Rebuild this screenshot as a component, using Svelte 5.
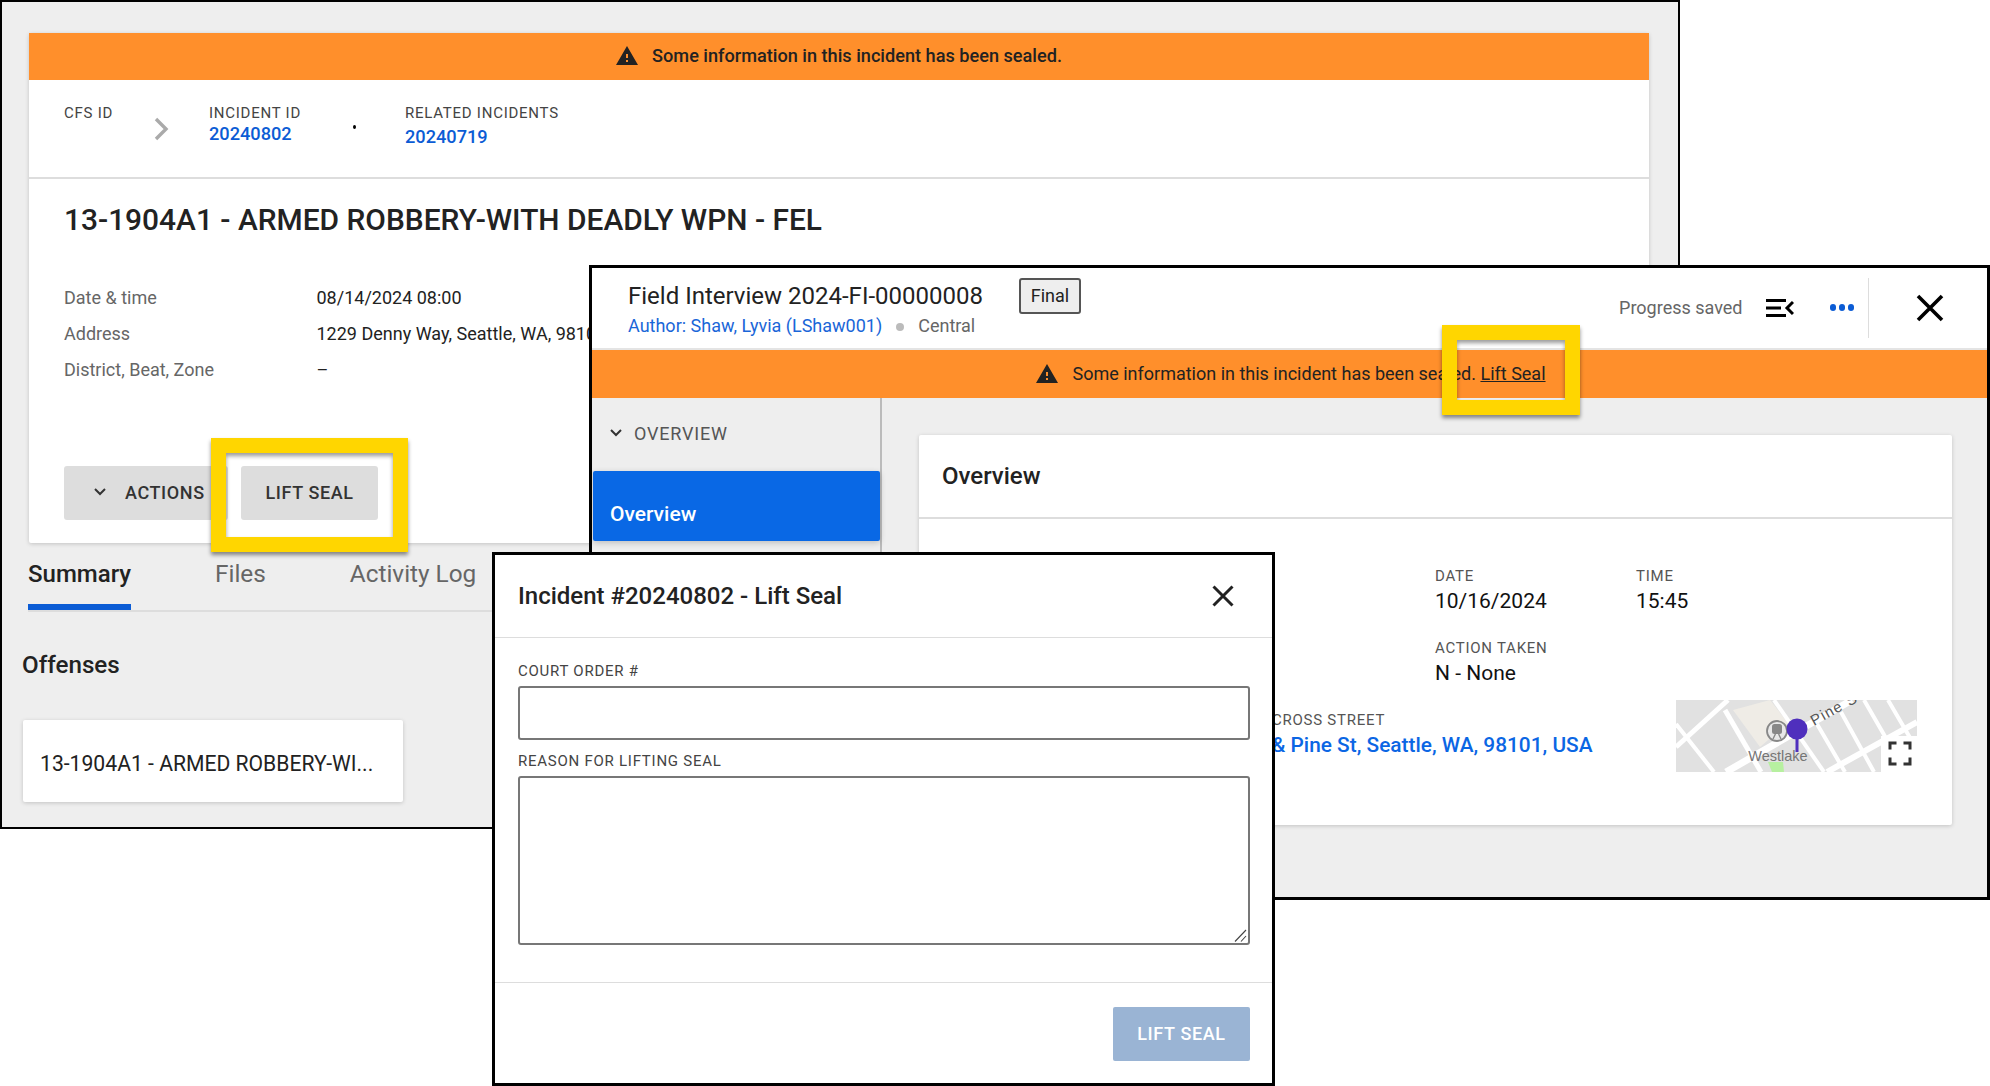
<script lang="ts">
	const rows = [
		['Date & time', '08/14/2024 08:00'],
		['Address', '1229 Denny Way, Seattle, WA, 98101, USA'],
		['District, Beat, Zone', '–']
	];
	const warning = 'M1 21h22L12 2 1 21zm12-3h-2v-2h2v2zm0-4h-2v-4h2v4z';
</script>

<!-- incident record, at the back -->
<section class="window record">
	<div class="card incident">
		<div class="banner bold">
			<svg class="warn" viewBox="1 2 22 19"><path d={warning} /></svg>
			<span>Some information in this incident has been sealed.</span>
		</div>
		<div class="crumbs">
			<div class="crumb cfs"><span class="label">CFS ID</span></div>
			<svg class="crumb-arrow" viewBox="0 0 16 24"><path d="M3 2l10 10-10 10" /></svg>
			<div class="crumb inc"><span class="label">Incident ID</span><a href="#inc">20240802</a></div>
			<span class="crumb-dot"></span>
			<div class="crumb rel"><span class="label">Related incidents</span><a href="#rel">20240719</a></div>
		</div>
		<div class="incident-body">
			<h1>13-1904A1 - ARMED ROBBERY-WITH DEADLY WPN - FEL</h1>
			<dl>
				{#each rows as [k, v]}
					<dt>{k}</dt>
					<dd>{v}</dd>
				{/each}
			</dl>
			<div class="actions">
				<button class="btn act">
					<svg viewBox="0 0 12 8"><path d="M1 1l5 5 5-5" /></svg>
					Actions
				</button>
				<button class="btn lift">Lift seal</button>
			</div>
		</div>
	</div>
	<nav class="tabs">
		<span class="tab on">Summary</span>
		<span class="tab">Files</span>
		<span class="tab">Activity Log</span>
	</nav>
	<h2 class="offenses">Offenses</h2>
	<div class="card offense">13-1904A1 - ARMED ROBBERY-WI...</div>
</section>

<div class="callout callout-a"></div>

<!-- field interview -->
<section class="window interview">
	<header class="fi-head">
		<div class="fi-title">
			<div class="fi-line">
				<h2>Field Interview 2024-FI-00000008</h2>
				<span class="status">Final</span>
			</div>
			<div class="fi-meta">
				<a href="#author">Author: Shaw, Lyvia (LShaw001)</a>
				<i class="meta-dot"></i>
				<span>Central</span>
			</div>
		</div>
		<div class="fi-tools">
			<span class="saved">Progress saved</span>
			<svg class="collapse" viewBox="0 0 28 18">
				<path d="M0 1.5h20M0 9h15M0 16.5h20" />
				<path d="M27 3l-6 6 6 6" />
			</svg>
			<span class="dots"><i></i><i></i><i></i></span>
			<span class="sep"></span>
			<svg class="close-big" viewBox="0 0 28 28"><path d="M2 2l24 24M26 2L2 26" /></svg>
		</div>
	</header>
	<div class="banner plain">
		<svg class="warn" viewBox="1 2 22 19"><path d={warning} /></svg>
		<span>Some information in this incident has been sealed. <u>Lift Seal</u></span>
	</div>
	<div class="fi-body">
		<aside>
			<div class="side-head">
				<svg viewBox="0 0 12 8"><path d="M1 1l5 5 5-5" /></svg>
				<span>Overview</span>
			</div>
			<div class="side-item">Overview</div>
		</aside>
		<main>
			<div class="card overview">
				<h3>Overview</h3>
				<div class="ov-grid">
					<div class="field date"><span class="label">Date</span><b>10/16/2024</b></div>
					<div class="field"><span class="label">Time</span><b>15:45</b></div>
					<div class="field date action"><span class="label">Action taken</span><b>N - None</b></div>
				</div>
				<div class="ov-place">
					<div class="field cross">
						<span class="label">Cross street</span>
						<a href="#map">&amp; Pine St, Seattle, WA, 98101, USA</a>
					</div>
					<svg class="map" viewBox="0 0 241 72">
						<rect width="241" height="72" fill="#e1e1e1" />
						<path d="M57 10L94 0l18 23-28 24z" fill="#efece6" />
						<path d="M92 62h15l1 10H96z" fill="#b7f0a0" />
						<g fill="none" stroke="#fff">
							<path d="M0 47L52 0" stroke-width="5" />
							<path d="M0 24l38 48" stroke-width="4" />
							<path d="M49 10l36 62" stroke-width="5" />
							<path d="M50 72L176 0" stroke-width="7" />
							<path d="M151 72l90-50" stroke-width="6" />
							<path d="M98 0l50 72" stroke-width="4" />
							<path d="M141 24l28 48M165 12l33 60M188 0l30 52M212 0l28 48" stroke-width="4" />
						</g>
						<circle cx="101" cy="31" r="10" fill="#e8e8e8" stroke="#888" stroke-width="1.8" />
						<rect x="96" y="24" width="10" height="10" rx="2.5" fill="#888" />
						<path d="M97 39l2.4-5M105 39l-2.4-5" stroke="#888" stroke-width="1.4" />
						<text class="map-name" x="102" y="60.5" text-anchor="middle">Westlake</text>
						<text class="map-road" x="138" y="26" transform="rotate(-29 138 26)">Pine St</text>
						<path d="M121 30v22" stroke="#4f2fbd" stroke-width="3" />
						<circle cx="121" cy="29" r="10.5" fill="#4f2fbd" />
						<rect x="205" y="36" width="36" height="36" fill="#fff" />
						<path d="M214 49.500v-6.500h6.500M227.500 43h6.500v6.500M234 57.500v6.500h-6.500M220.500 64h-6.500v-6.500" fill="none" stroke="#333" stroke-width="3" />
					</svg>
				</div>
			</div>
		</main>
	</div>
</section>

<div class="callout callout-b"></div>

<!-- lift seal dialog -->
<section class="window dialog">
	<header class="dlg-head">
		<h2>Incident #20240802 - Lift Seal</h2>
		<svg viewBox="0 0 22 22"><path d="M1.5 1.5l19 19M20.5 1.5l-19 19" /></svg>
	</header>
	<div class="dlg-body">
		<label>
			<span class="label">Court order #</span>
			<input type="text" />
		</label>
		<label class="area">
			<span class="label">Reason for lifting seal</span>
			<textarea></textarea>
			<svg class="grip" viewBox="0 0 13 13"><path d="M1 12.500L12 1M7 12.500L12 7" /></svg>
		</label>
	</div>
	<footer class="dlg-foot">
		<button class="submit" disabled>Lift seal</button>
	</footer>
</section>

<style>
	:global(body) {
		margin: 0;
		background: #fff;
		font-family: Roboto, 'Noto Sans', sans-serif;
		color: #222;
	}

	h1, h2, h3, dl, dd { margin: 0; }
	a { color: #0b5cd5; text-decoration: none; }
	svg { display: block; flex: none; }

	.window {
		position: absolute;
		box-sizing: border-box;
		border: 3px solid #000;
		background: #eee;
		overflow: hidden;
	}

	.card {
		background: #fff;
		border-radius: 2px;
		box-shadow: 0 1px 4px rgba(0, 0, 0, 0.18);
	}

	.label {
		display: block;
		font-size: 15px;
		line-height: 18px;
		letter-spacing: 0.75px;
		text-transform: uppercase;
		color: #444;
	}

	.banner {
		display: flex;
		align-items: center;
		justify-content: center;
		box-sizing: border-box;
		gap: 14px;
		height: 47px;
		background: #ff8f2b;
		font-size: 18px;
		color: #222;
	}
	.banner.bold { font-size: 18.15px; font-weight: 500; padding: 0 0 2px; }
	.banner.plain { height: 48px; padding: 0 0 2px 3px; }
	.warn { width: 22px; height: 19px; fill: #222; fill-rule: evenodd; }

	.callout {
		position: absolute;
		box-sizing: border-box;
		border: 15px solid #ffd600;
		box-shadow: 0 3px 4px rgba(0, 0, 0, 0.45), inset 0 3px 4px rgba(0, 0, 0, 0.4);
	}
	.callout-a { left: 211px; top: 438px; width: 197px; height: 114px; }
	.callout-b { left: 1442px; top: 325px; width: 138px; height: 90px; }

	/* record */
	.record {
		left: 0;
		top: 0;
		width: 1680px;
		height: 829px;
		border-width: 2px;
		padding: 31px 0 0 27px;
	}
	.incident { width: 1620px; height: 510px; }
	.crumbs {
		display: flex;
		box-sizing: border-box;
		height: 99px;
		padding: 24px 0 0 35px;
		border-bottom: 2px solid #ddd;
	}
	.crumb a { display: block; font-size: 18.2px; font-weight: 500; line-height: 22px; margin-top: 1px; }
	.cfs { width: 89px; }
	.crumb-arrow {
		width: 16px;
		height: 24px;
		margin-top: 13px;
		fill: none;
		stroke: #aaa;
		stroke-width: 3.4;
	}
	.inc { margin-left: 40px; width: 144px; }
	.crumb-dot {
		width: 3px;
		height: 4px;
		margin-top: 21px;
		border-radius: 50%;
		background: #000;
	}
	.rel { margin-left: 49px; }
	.rel a { margin-top: 4px; }

	.incident-body { padding: 23px 35px 0; }
	h1 { font-size: 29.9px; font-weight: 500; line-height: 36px; }
	dl {
		display: grid;
		grid-template-columns: 252.5px 1fr;
		grid-auto-rows: 36px;
		align-items: center;
		margin-top: 41px;
		font-size: 18px;
	}
	dt { color: #666; }
	.actions { display: flex; gap: 13px; margin-top: 79px; }
	.btn {
		height: 54px;
		padding-bottom: 2px;
		border: 0;
		border-radius: 3px;
		background: #ddd;
		font: 500 18px Roboto, sans-serif;
		letter-spacing: 0.6px;
		text-transform: uppercase;
		color: #333;
	}
	.act {
		display: flex;
		align-items: center;
		gap: 19px;
		width: 164px;
		padding: 0 0 2px 30px;
	}
	.act svg, .side-head svg {
		width: 12px;
		height: 8px;
		fill: none;
		stroke: #333;
		stroke-width: 2;
	}
	.lift { width: 137px; padding: 0 0 2px; }

	.tabs {
		display: flex;
		gap: 84px;
		height: 67px;
		margin: 0 0 0 -1px;
		padding-left: 0;
		border-bottom: 2px solid #ddd;
		box-sizing: content-box;
	}
	.tab {
		box-sizing: border-box;
		height: 67px;
		padding-top: 16px;
		font-size: 24.35px;
		line-height: 30px;
		color: #666;
	}
	.tab.on {
		border-bottom: 6px solid #0b5cd5;
		font-size: 24px;
		font-weight: 500;
		color: #222;
	}
	.offenses {
		margin: 37px 0 0 -7px;
		font-size: 24.2px;
		font-weight: 500;
		line-height: 32px;
	}
	.offense {
		display: flex;
		align-items: center;
		box-sizing: border-box;
		width: 380px;
		height: 82px;
		margin: 39px 0 0 -6px;
		padding: 5px 0 0 17px;
		font-size: 21.15px;
	}

	/* interview */
	.interview { left: 589px; top: 265px; width: 1401px; height: 635px; }
	.fi-head {
		display: flex;
		justify-content: space-between;
		box-sizing: border-box;
		height: 82px;
		background: #fff;
		border-bottom: 2px solid #e4e4e4;
	}
	.fi-title { padding: 10px 0 0 36px; }
	.fi-line { display: flex; align-items: center; gap: 36px; height: 36px; }
	.fi-line h2 { font-size: 24px; font-weight: 400; }
	.status {
		box-sizing: border-box;
		width: 62px;
		height: 36px;
		border: 2px solid #555;
		border-radius: 3px;
		background: #eee;
		font-size: 18px;
		line-height: 32px;
		text-align: center;
	}
	.fi-meta { display: flex; align-items: center; font-size: 18px; margin-top: 1px; }
	.fi-meta a { color: #1a66d8; }
	.fi-meta span { color: #666; }
	.meta-dot {
		width: 8px;
		height: 8px;
		margin: 2px 14px 0 14px;
		border-radius: 50%;
		background: #bbb;
	}
	.fi-tools { display: flex; align-items: center; padding-right: 43px; height: 80px; box-sizing: border-box; }
	.saved { font-size: 18px; color: #666; margin: -2px 23px 0 0; }
	.collapse { width: 28px; height: 18px; margin-top: -1px; fill: none; stroke: #000; stroke-width: 3; }
	.dots { display: flex; gap: 2.5px; margin: -1px 0 0 36px; }
	.dots i { width: 6.5px; height: 6.5px; border-radius: 50%; background: #0b5cd5; }
	.sep { width: 1px; height: 60px; background: #ddd; margin: 0 47px 0 14px; }
	.close-big { width: 28px; height: 28px; fill: none; stroke: #000; stroke-width: 3.6; }

	.fi-body { display: flex; height: 502px; }
	aside {
		box-sizing: border-box;
		width: 290px;
		border-right: 2px solid #bbb;
	}
	.side-head {
		display: flex;
		align-items: center;
		box-sizing: border-box;
		gap: 12px;
		height: 73px;
		padding: 0 0 3px 18px;
		font-size: 18px;
		letter-spacing: 0.8px;
		text-transform: uppercase;
		color: #555;
	}
	.side-item {
		box-sizing: border-box;
		width: 287px;
		height: 70px;
		margin-left: 1px;
		padding: 30px 0 0 17px;
		background: #0968e5;
		box-shadow: 0 2px 6px rgba(0, 0, 0, 0.2);
		border-radius: 2px;
		font-size: 21px;
		font-weight: 500;
		line-height: 26px;
		color: #fff;
	}
	main { flex: 1; padding: 37px 0 0 37px; }
	.overview { width: 1033px; height: 390px; }
	.overview h3 {
		box-sizing: border-box;
		height: 84px;
		padding: 26px 0 0 23px;
		border-bottom: 2px solid #ddd;
		font-size: 24px;
		font-weight: 500;
		line-height: 30px;
	}
	.ov-grid {
		display: grid;
		grid-template-columns: 201px 1fr;
		row-gap: 26px;
		padding: 48px 0 0 516px;
	}
	.field { display: block; }
	.field .label { color: #555; }
	.field b { display: block; margin-top: 4px; font-size: 21px; font-weight: 400; line-height: 24px; color: #111; }
	.action { grid-column: 1 / span 2; }
	.ov-place { display: flex; margin-top: 15px; }
	.cross { margin: 11px 0 0 353px; width: 404px; }
	.cross a { display: block; margin-top: 4px; font-size: 20.85px; font-weight: 500; line-height: 24px; color: #0b66e4; white-space: nowrap; }
	.map { width: 241px; height: 72px; }
	.map-name { font: 14.5px 'Liberation Sans', sans-serif; fill: #757575; }
	.map-road { font: 15px 'Liberation Sans', sans-serif; letter-spacing: 1.2px; fill: #555; }

	/* dialog */
	.dialog {
		left: 492px;
		top: 552px;
		width: 783px;
		height: 534px;
		background: #fff;
	}
	.dlg-head {
		display: flex;
		align-items: center;
		justify-content: space-between;
		box-sizing: border-box;
		height: 83px;
		padding: 0 38px 0 23px;
		border-bottom: 1px solid #ddd;
	}
	.dlg-head h2 { font-size: 24px; font-weight: 500; }
	.dlg-head svg { width: 22px; height: 22px; fill: none; stroke: #222; stroke-width: 3; }
	.dlg-body { box-sizing: border-box; height: 345px; padding: 24px 22px 0 23px; border-bottom: 1px solid #ddd; }
	label { display: block; }
	label + label { margin-top: 12px; }
	.area { position: relative; }
	input, textarea {
		display: block;
		box-sizing: border-box;
		width: 100%;
		margin: 6px 0 0;
		border: 2px solid #777;
		border-radius: 3px;
		background: #fff;
	}
	input { height: 54px; }
	textarea { height: 169px; resize: none; }
	.grip {
		position: absolute;
		right: 3px;
		bottom: 3px;
		width: 13px;
		height: 13px;
		fill: none;
		stroke: #444;
		stroke-width: 1.1;
	}
	.dlg-foot { display: flex; justify-content: flex-end; padding: 24px 22px 0; }
	.submit {
		width: 137px;
		height: 54px;
		padding: 0 0 2px;
		border: 0;
		border-radius: 2px;
		background: #9ab4d4;
		font: 500 18px Roboto, sans-serif;
		letter-spacing: 0.65px;
		text-transform: uppercase;
		color: #fff;
	}
</style>
